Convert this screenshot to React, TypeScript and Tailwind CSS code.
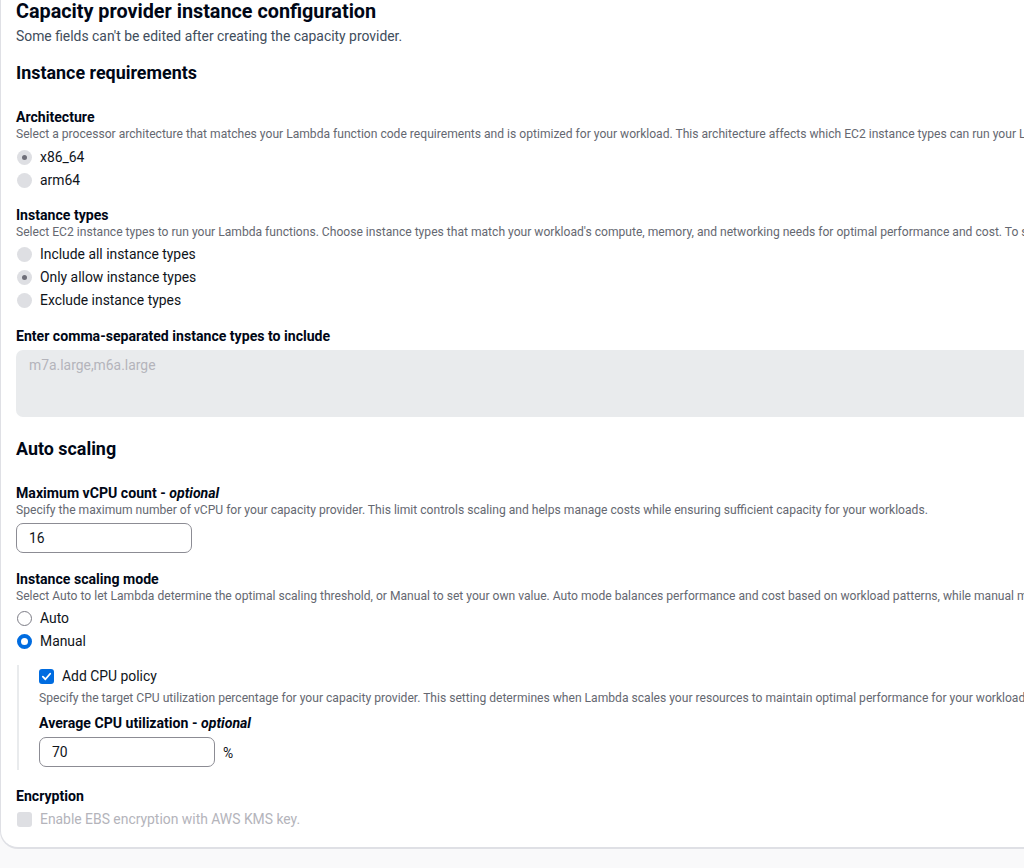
import React from "react";

const font = { fontFamily: "Roboto, 'Open Sans', Arial, sans-serif" };

const Label = ({ children, className = "" }: { children: React.ReactNode; className?: string }) => (
  <div className={`text-[14.1px] leading-[16px] font-bold text-[#000716] whitespace-nowrap ${className}`}>{children}</div>
);

const Desc = ({ children, className = "" }: { children: React.ReactNode; className?: string }) => (
  <div className={`text-[12.1px] leading-[14px] text-[#656871] whitespace-nowrap ${className}`}>{children}</div>
);

const DisabledRadio = ({ label, checked }: { label: string; checked?: boolean }) => (
  <div className="flex items-center h-[23px]">
    <span className="ml-[1px] w-[15px] h-[15px] rounded-full bg-[#dedfe3] flex items-center justify-center">
      {checked && <span className="w-[5px] h-[5px] rounded-full bg-[#6e6e78]" />}
    </span>
    <span className="ml-[8px] text-[13.9px] text-[#0f141a]">{label}</span>
  </div>
);

const Radio = ({ label, checked }: { label: string; checked?: boolean }) => (
  <div className="flex items-center h-[23px]">
    {checked ? (
      <span className="ml-[1px] w-[15px] h-[15px] rounded-full border-[4.5px] border-[#006ce0] bg-white" />
    ) : (
      <span className="ml-[1px] w-[15px] h-[15px] rounded-full border-[1.5px] border-[#7d7d86] bg-white" />
    )}
    <span className="ml-[8px] text-[13.9px] text-[#0f141a]">{label}</span>
  </div>
);

const Input = ({ value, className = "" }: { value: string; className?: string }) => (
  <div className={`h-[30px] border border-[#8c8c94] rounded-[7px] bg-white flex items-center pl-[12px] text-[13.9px] text-[#0f141a] ${className}`}>
    {value}
  </div>
);

export default function App() {
  return (
    <div className="w-[1024px] h-[868px] overflow-hidden bg-[#f9f9fa]" style={font}>
      <div className="w-[1400px] bg-white border-b-2 border-l border-[#dfe0e5] rounded-bl-[18px] pl-[15px] pb-[17px]">
        <div className="text-[19.8px] leading-[24px] font-bold text-[#000716]">Capacity provider instance configuration</div>
        <div className="mt-[4px] text-[13.9px] leading-[16px] text-[#414d5c]">
          Some fields can't be edited after creating the capacity provider.
        </div>

        <div className="mt-[18px] text-[17.9px] leading-[22px] font-bold text-[#000716]">Instance requirements</div>

        <Label className="mt-[25px]">Architecture</Label>
        <Desc className="mt-[2px]">
          Select a processor architecture that matches your Lambda function code requirements and is optimized for your workload. This architecture affects which EC2 instance types can run your Lambda functions.
        </Desc>
        <div className="mt-[5px]">
          <DisabledRadio label="x86_64" checked />
          <DisabledRadio label="arm64" />
        </div>

        <Label className="mt-[15px]">Instance types</Label>
        <Desc className="mt-[2px]">
          Select EC2 instance types to run your Lambda functions. Choose instance types that match your workload's compute, memory, and networking needs for optimal performance and cost. To see available instance types, visit the EC2 console.
        </Desc>
        <div className="mt-[4px]">
          <DisabledRadio label="Include all instance types" />
          <DisabledRadio label="Only allow instance types" checked />
          <DisabledRadio label="Exclude instance types" />
        </div>

        <Label className="mt-[16px]">Enter comma-separated instance types to include</Label>
        <div className="mt-[6px] h-[67px] w-[1100px] bg-[#e9ebed] rounded-[7px] pl-[13px] pt-[8px] text-[13.9px] leading-[14px] text-[#b4b4bb]">
          m7a.large,m6a.large
        </div>

        <div className="mt-[21px] text-[17.9px] leading-[22px] font-bold text-[#000716]">Auto scaling</div>

        <Label className="mt-[25px]">
          Maximum vCPU count - <i className="font-bold">optional</i>
        </Label>
        <Desc className="mt-[2px]">
          Specify the maximum number of vCPU for your capacity provider. This limit controls scaling and helps manage costs while ensuring sufficient capacity for your workloads.
        </Desc>
        <Input value="16" className="mt-[6px] w-[176px]" />

        <Label className="mt-[18px]">Instance scaling mode</Label>
        <Desc className="mt-[2px]">
          Select Auto to let Lambda determine the optimal scaling threshold, or Manual to set your own value. Auto mode balances performance and cost based on workload patterns, while manual mode gives you direct control.
        </Desc>
        <div className="mt-[4px]">
          <Radio label="Auto" />
          <Radio label="Manual" checked />
        </div>

        <div className="mt-[12px] ml-[1px] border-l-2 border-[#e9ebed] pl-[20px] pb-[3px]">
          <div className="flex items-center h-[22px]">
            <span className="w-[15px] h-[15px] rounded-[3px] bg-[#006ce0] flex items-center justify-center">
              <svg width="11" height="11" viewBox="0 0 12 12" fill="none">
                <path d="M2 6.2 L4.8 9 L10 3" stroke="white" strokeWidth="2" strokeLinecap="round" strokeLinejoin="round" />
              </svg>
            </span>
            <span className="ml-[8px] text-[13.9px] text-[#0f141a]">Add CPU policy</span>
          </div>
          <Desc className="mt-[4px]">
            Specify the target CPU utilization percentage for your capacity provider. This setting determines when Lambda scales your resources to maintain optimal performance for your workloads.
          </Desc>
          <Label className="mt-[10px]">
            Average CPU utilization - <i className="font-bold">optional</i>
          </Label>
          <div className="mt-[6px] flex items-center">
            <Input value="70" className="w-[176px]" />
            <span className="ml-[8px] mt-[2px] text-[13.9px] text-[#0f141a]">%</span>
          </div>
        </div>

        <Label className="mt-[18px]">Encryption</Label>
        <div className="mt-[4px] flex items-center h-[22px]">
          <span className="ml-[1px] w-[15px] h-[15px] rounded-[3px] bg-[#dedfe3]" />
          <span className="ml-[8px] text-[13.9px] text-[#b4b4bb]">Enable EBS encryption with AWS KMS key.</span>
        </div>
      </div>
    </div>
  );
}
